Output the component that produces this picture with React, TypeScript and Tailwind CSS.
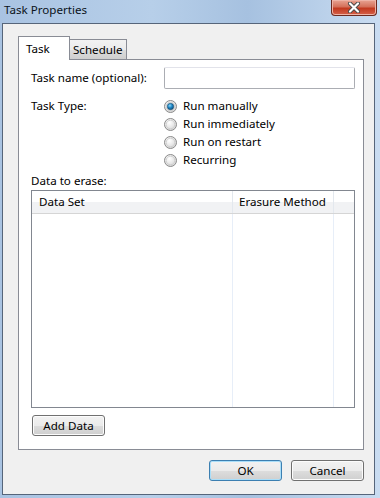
import React from "react";

const ui = { fontFamily: '"Noto Sans", "Open Sans", sans-serif' };

function Radio({ checked }: { checked?: boolean }) {
  return (
    <svg width="13" height="13" viewBox="0 0 13 13" className="shrink-0">
      <defs>
        <radialGradient id="rg" cx="0.4" cy="0.35" r="0.7">
          <stop offset="0" stopColor="#ffffff" />
          <stop offset="1" stopColor="#d4d4d4" />
        </radialGradient>
        <radialGradient id="dot" cx="0.4" cy="0.35" r="0.7">
          <stop offset="0" stopColor="#8fd4f4" />
          <stop offset="0.5" stopColor="#1a86c6" />
          <stop offset="1" stopColor="#0f4a75" />
        </radialGradient>
      </defs>
      <circle cx="6.5" cy="6.5" r="6" fill="url(#rg)" stroke="#8b8b8b" />
      <circle cx="6.5" cy="6.5" r="4.3" fill="none" stroke="#c9c9c9" strokeWidth="0.8" />
      {checked && <circle cx="6.5" cy="6.5" r="3.2" fill="url(#dot)" stroke="#1b4d6e" strokeWidth="0.6" />}
    </svg>
  );
}

function Button({ label, primary, className }: { label: string; primary?: boolean; className?: string }) {
  return (
    <div
      className={`flex h-[21px] items-center justify-center rounded-[3px] border text-[11.6px] text-black ${
        primary ? "border-[#3c7fb1] shadow-[inset_0_0_0_1px_#a9def9]" : "border-[#707070] shadow-[inset_0_0_0_1px_#fcfcfc]"
      } bg-[linear-gradient(#f2f2f2_0%,#ebebeb_50%,#dddddd_51%,#cfcfcf_100%)] ${className ?? ""}`}
    >
      {label}
    </div>
  );
}

export default function App() {
  const types = ["Run manually", "Run immediately", "Run on restart", "Recurring"];
  return (
    <div
      style={ui}
      className="flex h-[498px] w-[380px] flex-col overflow-hidden bg-[linear-gradient(90deg,#a9c3e2_0%,#b7cfe9_40%,#a6c1e0_65%,#c9dcf1_100%)]"
    >
      {/* title bar */}
      <div className="flex h-[23px] shrink-0 items-start justify-between">
        <span className="pl-[4px] pt-[1px] text-[11.6px] text-[#0b1320]">Task Properties</span>
        <div className="mr-[3px] flex h-[16px] w-[46px] items-center justify-center rounded-b-[4px] border border-t-0 border-[#6b2a20] bg-[linear-gradient(#e8a493_0%,#d4705a_45%,#c2391f_55%,#d5614a_100%)] shadow-[inset_0_0_0_1px_#eeb3a6]">
          <svg width="14" height="11" viewBox="0 0 14 11">
            <path d="M3 1.5 L11 9.5 M11 1.5 L3 9.5" stroke="#4a4a4a" strokeWidth="4" strokeLinecap="round" />
            <path d="M3 1.5 L11 9.5 M11 1.5 L3 9.5" stroke="#ffffff" strokeWidth="2.2" strokeLinecap="round" />
          </svg>
        </div>
      </div>

      {/* client area */}
      <div className="ml-[2px] flex h-[472px] w-[373px] flex-col border border-[#56657a] bg-[#f0f0f0]">
        <div className="flex flex-col pl-[15px] pt-[12px]">
          {/* tabs */}
          <div className="relative z-10 flex items-end">
            <div className="-mb-px flex h-[24px] w-[52px] items-start border border-b-0 border-[#898c95] bg-white pl-[7px] pt-[3px] text-[11.6px] text-black">
              Task
            </div>
            <div className="flex h-[20px] w-[57px] items-center border border-l-0 border-b-0 border-[#898c95] bg-[linear-gradient(#f2f2f2_0%,#ebebeb_50%,#dddddd_51%,#cfcfcf_100%)] pl-[3px] text-[11.6px] text-black">
              Schedule
            </div>
          </div>

          {/* tab panel */}
          <div className="flex h-[391px] w-[346px] flex-col border border-[#898c95] bg-white pl-[12px] pt-[7px] text-[11.6px] text-black">
            <div className="flex h-[22px] items-center">
              <span className="w-[133px]">Task name (optional):</span>
              <div className="h-[22px] w-[191px] rounded-[2px] border border-[#abadb3] border-t-[#e2e3ea]" />
            </div>

            <div className="mt-[8px] flex">
              <span className="w-[133px] leading-[18px]">Task Type:</span>
              <div className="flex flex-col">
                {types.map((t, i) => (
                  <div key={t} className="flex h-[18px] items-center gap-[6px]">
                    <Radio checked={i === 0} />
                    <span>{t}</span>
                  </div>
                ))}
              </div>
            </div>

            <div className="mt-[3px] h-[18px] leading-[18px]">Data to erase:</div>

            {/* list view */}
            <div className="flex h-[218px] w-[324px] flex-col border border-[#828790] bg-white">
              <div className="flex h-[23px] shrink-0 border-b border-[#d5d5d5] bg-[linear-gradient(#ffffff_0%,#ffffff_50%,#f1f2f4_51%,#f1f2f4_100%)]">
                <div className="flex w-[201px] items-center border-r border-[#e3e8ee] pl-[7px]">Data Set</div>
                <div className="flex w-[101px] items-center border-r border-[#e3e8ee] pl-[6px]">Erasure Method</div>
                <div className="flex-1" />
              </div>
              <div className="flex flex-1">
                <div className="w-[201px] border-r border-[#e7eef8]" />
                <div className="w-[101px] border-r border-[#e7eef8]" />
              </div>
            </div>

            <Button label="Add Data" className="mt-[7px] ml-[1px] w-[73px]" />
          </div>
        </div>

        {/* dialog buttons */}
        <div className="mt-[10px] flex justify-end gap-[9px] pr-[10px]">
          <Button label="OK" primary className="w-[73px]" />
          <Button label="Cancel" className="w-[73px]" />
        </div>
      </div>
    </div>
  );
}
